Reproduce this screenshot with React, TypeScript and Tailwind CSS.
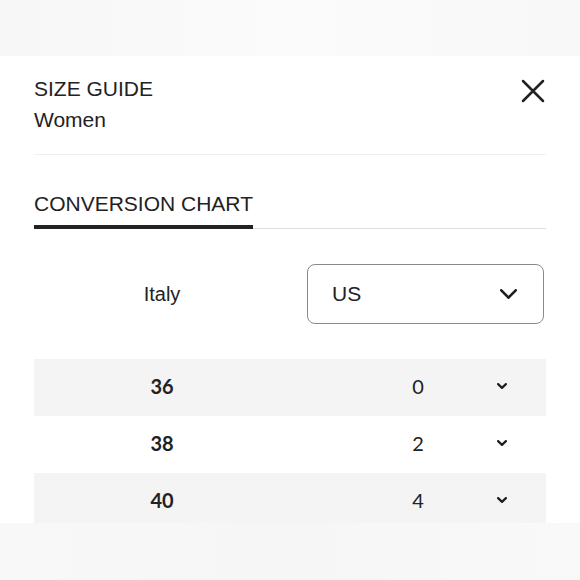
import React from 'react';

const rows = [
  { it: '36', us: '0' },
  { it: '38', us: '2' },
  { it: '40', us: '4' },
];

const Chevron: React.FC<{ className?: string; w: number; h: number; sw: number }> = ({ className, w, h, sw }) => (
  <svg className={className} width={w} height={h} viewBox={`0 0 ${w} ${h}`} fill="none">
    <polyline
      points={`${sw / 2},${sw / 2} ${w / 2},${h - sw / 2} ${w - sw / 2},${sw / 2}`}
      stroke="#1f1f1f"
      strokeWidth={sw}
      strokeLinecap="round"
      strokeLinejoin="round"
    />
  </svg>
);

const App: React.FC = () => {
  return (
    <div className="w-[580px] h-[580px] overflow-hidden flex flex-col bg-white text-[#222] font-['Liberation_Sans',Arial,sans-serif]">
      <div className="h-[56px] shrink-0 bg-gradient-to-r from-[#f7f7f7] via-[#fbfbfb] to-[#f8f8f8]" />

      <div className="flex-1 min-h-0 overflow-hidden bg-white px-[34px] pt-[17px]">
        {/* header */}
        <div className="flex justify-between border-b border-[#efefef] pb-[19px]">
          <div className="text-[21px] leading-[31px]">
            <div>SIZE GUIDE</div>
            <div>Women</div>
          </div>
          <button className="mt-[6px] mr-[1px] h-[24px] w-[24px]">
            <svg width="24" height="24" viewBox="0 0 24 24" fill="none">
              <path d="M2 2 L22 22 M22 2 L2 22" stroke="#222" strokeWidth="2.5" strokeLinecap="round" />
            </svg>
          </button>
        </div>

        {/* tabs */}
        <div className="mt-[33px] flex items-end">
          <div className="border-b-4 border-[#222] pb-[6px] text-[21px] leading-[31px]">CONVERSION CHART</div>
          <div className="flex-1 border-b border-[#dedede]" />
        </div>

        {/* selectors */}
        <div className="mt-[35px] grid grid-cols-2 items-center">
          <div className="text-center text-[20px]">Italy</div>
          <div className="ml-auto mr-[2px] flex h-[60px] w-[237px] items-center justify-between rounded-[8px] border-[1.5px] border-[#8a8a8a] pl-[24px] pr-[26px] text-[21px]">
            <span>US</span>
            <Chevron w={17} h={10} sw={2.6} />
          </div>
        </div>

        {/* rows */}
        <div className="mt-[35px] font-['Lato',sans-serif] text-[20px]">
          {rows.map((r, i) => (
            <div
              key={r.it}
              className={`grid h-[57px] grid-cols-2 items-center pb-[3px] ${i % 2 === 0 ? 'bg-[#f4f4f4]' : 'bg-white'}`}
            >
              <div className="text-center font-bold">{r.it}</div>
              <div className="grid grid-cols-[1fr_auto_1fr] items-center">
                <div />
                <span>{r.us}</span>
                <div className="ml-[73px]">
                  <Chevron w={10} h={6} sw={2.2} />
                </div>
              </div>
            </div>
          ))}
        </div>
      </div>

      <div className="h-[57px] shrink-0 bg-gradient-to-r from-[#f8f8f8] via-[#f6f6f6] to-[#f9f9f9]" />
    </div>
  );
};

export default App;
